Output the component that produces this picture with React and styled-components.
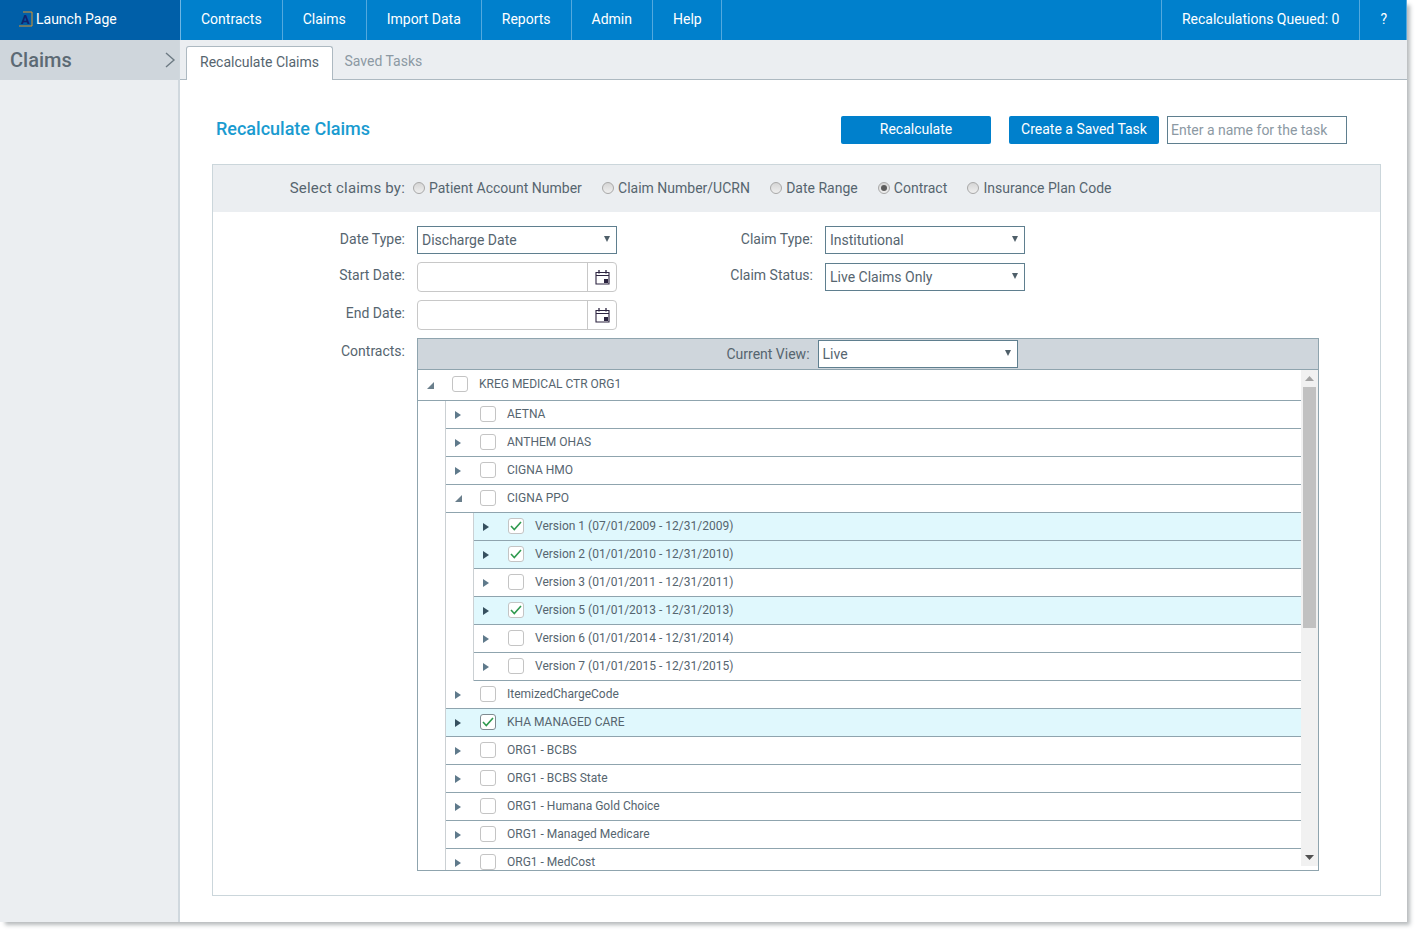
import React from 'react';
import styled, { createGlobalStyle } from 'styled-components';

const Global = createGlobalStyle`
  html, body, #root { margin: 0; padding: 0; background: #fff; height: 100%; }
  body { font-family: Roboto, "Liberation Sans", sans-serif; color: #56656f; overflow: hidden; }
  * { box-sizing: border-box; }
`;

const Frame = styled.div`
  width: 1407px; height: 922px; display: flex; flex-direction: column; overflow: hidden; background: #fff;
  box-shadow: 4px 4px 4px -1px rgba(50,60,65,.35);
`;
const Header = styled.header`display: flex; height: 40px; background: #0080cc; color: #fff; font-size: 14px; flex: none;`;
const Launch = styled.div`
  width: 181px; background: #005fa8; display: flex; align-items: center; padding: 0 0 2px 18px; gap: 3px; border-right: 1px solid #6db6e4;
`;
const NavItem = styled.div`
  display: flex; align-items: center; height: 100%; padding: 0 ${p => p.$pr || 20}px 2px 20px; border-right: 1px solid #53a9de;
  ${p => p.$left ? 'border-left: 1px solid #53a9de; margin-left: auto;' : ''}
`;
const Body = styled.div`display: flex; flex: 1; min-height: 0;`;
const Side = styled.aside`width: 180px; flex: none; background: #ebeef1; border-right: 2px solid #d0d8de;`;
const SideHead = styled.div`
  height: 40px; background: #cfd6dc; display: flex; align-items: center; justify-content: space-between;
  padding: 0 3px 0 10px; margin-right: -1px; font-size: 20px; font-weight: 500; color: #5c6a74;
`;
const Main = styled.main`flex: 1; display: flex; flex-direction: column; min-width: 0;`;
const Tabs = styled.div`
  height: 40px; flex: none; background: #ebeef1; border-bottom: 1px solid #adb9c1; display: flex; align-items: flex-end; padding-left: 6px;
`;
const Tab = styled.div`
  height: 34px; display: flex; align-items: center; font-size: 14px; padding: 0 13px; position: relative; top: ${p => p.$on ? '1px' : '0'};
  ${p => p.$on
    ? 'background:#fff; border:1px solid #adb9c1; border-bottom:0; border-radius:3px 3px 0 0; color:#56656f; padding-bottom:3px;'
    : 'color:#8c99a3; padding: 0 11.5px 2px 11.5px;'}
`;
const Content = styled.div`flex: 1; padding: 36px 26px 26px 32px; display: flex; flex-direction: column;`;
const TopBar = styled.div`display: flex; align-items: center; height: 28px; margin-bottom: 20px;`;
const Title = styled.h1`margin: 0 0 0 4px; font-size: 18px; font-weight: 500; color: #1a9bd0; flex: 1; position: relative; top: -2px;`;
const Btn = styled.button`
  height: 28px; width: ${p => p.$w}px; background: #0080cc; color: #fff; border: 0; border-radius: 2px; font: 14px Roboto, sans-serif; margin-right: ${p => p.$mr}px; padding: 0 0 2px;
`;
const TaskInput = styled.div`
  width: 180px; height: 28px; border: 1px solid #5f7f8f; font-size: 14px; color: #8c99a3; display: flex; align-items: center; padding-left: 3px; margin-right: 34px;
`;
const Panel = styled.section`width: 1169px; height: 732px; border: 1px solid #cbd6db; display: flex; flex-direction: column;`;
const SelectBar = styled.div`height: 47px; flex: none; background: #ebeef1; display: flex; align-items: center;`;
const SelectLabel = styled.span`width: 192px; text-align: right; font-size: 15px; letter-spacing: .2px; margin-right: 8px; position: relative; top: -1px;`;
const RadioItem = styled.label`display: flex; align-items: center; font-size: 14px; margin-right: 20.2px; gap: 4px; padding-bottom: 2px;`;
const RadioDot = styled.span`
  width: 12px; height: 12px; border-radius: 50%; border: 1px solid #a8a8a8; background: linear-gradient(#d6d6d6,#efefef); display: flex; align-items: center; justify-content: center;
  &::after { content: ''; display: ${p => p.$on ? 'block' : 'none'}; width: 6px; height: 6px; border-radius: 50%; background: #5c5c5c; }
`;
const Form = styled.div`padding-top: 14px; display: flex; flex-direction: column; flex: 1; min-height: 0;`;
const Row = styled.div`display: flex; align-items: flex-start; height: ${p => p.$h}px; margin-bottom: ${p => p.$mb || 0}px;`;
const Label = styled.div`
  width: ${p => p.$w || 192}px; text-align: right; margin-right: 12px; font-size: 14px; flex: none; padding-top: 5px;
`;
const Select = styled.div`
  width: 200px; height: 28px; flex: none; margin-top: ${p => p.$mt || 0}px; border: 1px solid #5f7f8f; background: #fff; display: flex; align-items: center; justify-content: space-between;
  padding: 0 6px 0 4px; font-size: 14px; color: #56656f;
  &::after { content: ''; border-left: 3.5px solid transparent; border-right: 3.5px solid transparent; border-top: 6px solid #4f5f69; margin-top: -2px; }
`;
const DateBox = styled.div`
  width: 200px; height: 30px; border: 1px solid #c8c8c8; border-radius: 4px; display: flex; justify-content: flex-end; background: #fff;
`;
const CalCell = styled.div`width: 29px; border-left: 1px solid #c8c8c8; display: flex; align-items: center; justify-content: center; padding-bottom: 1px;`;
const TreeBox = styled.div`width: 902px; height: 533px; border: 1px solid #8fa4ae; display: flex; flex-direction: column;`;
const TreeHead = styled.div`
  height: 31px; flex: none; background: #cfd6dc; border-bottom: 1px solid #8fa4ae; display: flex; align-items: center; justify-content: center; font-size: 14px; gap: 8px; padding-left: 8px;
`;
const TreeBody = styled.div`flex: 1; display: flex; min-height: 0;`;
const Scroll = styled.div`flex: 1; overflow: hidden; min-width: 0;`;
const Group = styled.div`margin-left: 27px; border-left: 1px solid #cbd0d3;`;
const TreeRow = styled.div`
  height: ${p => p.$h || 28}px; border-bottom: 1px solid #8fa4ae; display: flex; align-items: center; background: ${p => p.$on ? '#e0f8fd' : '#fff'};
  font-size: 12px; color: #56656f; padding: 0 0 2px 6px;
`;
const Arrow = styled.span`
  width: 12px; flex: none; display: flex; justify-content: center; margin-right: 16px; padding-top: 2px;
`;
const Check = styled.span`
  width: 16px; height: 16px; flex: none; border: 1px solid ${p => p.$focus ? '#7f8a90' : '#c4c4c4'}; border-radius: 3px; background: #fff; margin-right: 11px; display: flex; align-items: center; justify-content: center;
`;
const Bar = styled.div`width: 17px; flex: none; background: #f1f1f1; display: flex; flex-direction: column; align-items: center; height: 496px;`;
const BarArrow = styled.div`height: 17px; flex: none; display: flex; align-items: center; justify-content: center;`;
const Thumb = styled.div`width: 13px; height: 241px; background: #c1c1c1; flex: none;`;
const Spacer = styled.div`flex: 1;`;

const Right = ({ on }) => <svg width="6" height="8" viewBox="0 0 6 8"><path d="M0 0L6 4L0 8Z" fill={on ? '#36505f' : '#5f7a8b'} /></svg>;
const Down = () => <svg width="7" height="7" viewBox="0 0 7 7"><path d="M7 0V7H0Z" fill="#6a7f8c" /></svg>;
const Tick = () => <svg width="12" height="10" viewBox="0 0 12 10" fill="none"><path d="M1 5L4.3 8.5L11 1" stroke="#2f9a4f" strokeWidth="1.6" /></svg>;
const Chevron = () => <svg width="12" height="18" viewBox="0 0 12 18" fill="none"><path d="M2 2L10 9L2 16" stroke="#6d7a83" strokeWidth="1.4" /></svg>;
const Cal = () => (
  <svg width="15" height="16" viewBox="0 0 15 16" fill="none">
    <path d="M1 3.5H14V15H1Z M1 6.5H14" stroke="#2c2440" strokeWidth="1.1" />
    <path d="M4 1V4.5M11 1V4.5" stroke="#2c2440" strokeWidth="1.3" />
    <rect x="9" y="10" width="4" height="4" fill="#2c2440" />
  </svg>
);
const Logo = () => (
  <svg width="15" height="16" viewBox="0 0 15 16" fill="none">
    <path d="M5 1H14V15H1" stroke="#d9962a" strokeWidth="1" />
    <text x="3" y="13" fontFamily="Roboto, sans-serif" fontSize="13" fontWeight="700" fill="#12246e">A</text>
  </svg>
);
const Tri = ({ up }) => (
  <svg width="9" height="5" viewBox="0 0 9 5"><path d={up ? 'M4.5 0L9 5H0Z' : 'M0 0H9L4.5 5Z'} fill={up ? '#a3a3a3' : '#505050'} /></svg>
);

const Node = ({ label, open, on, h, focus }) => (
  <TreeRow $on={on} $h={h}>
    <Arrow>{open ? <Down /> : <Right on={on} />}</Arrow>
    <Check $focus={focus}>{on && <Tick />}</Check>
    {label}
  </TreeRow>
);

const radios = [
  ['Patient Account Number'], ['Claim Number/UCRN'], ['Date Range'], ['Contract', true], ['Insurance Plan Code'],
];
const versions = [
  ['Version 1 (07/01/2009 - 12/31/2009)', true],
  ['Version 2 (01/01/2010 - 12/31/2010)', true],
  ['Version 3 (01/01/2011 - 12/31/2011)'],
  ['Version 5 (01/01/2013 - 12/31/2013)', true],
  ['Version 6 (01/01/2014 - 12/31/2014)'],
  ['Version 7 (01/01/2015 - 12/31/2015)'],
];
const after = [
  ['ItemizedChargeCode'], ['KHA MANAGED CARE', true, true], ['ORG1 - BCBS'], ['ORG1 - BCBS State'],
  ['ORG1 - Humana Gold Choice'], ['ORG1 - Managed Medicare'], ['ORG1 - MedCost'],
];
const nav = [['Contracts'], ['Claims'], ['Import Data'], ['Reports'], ['Admin'], ['Help', 19]];

export default function App() {
  return (
    <Frame>
      <Global />
      <Header>
        <Launch><Logo />Launch Page</Launch>
        {nav.map(([t, pr]) => <NavItem key={t} $pr={pr}>{t}</NavItem>)}
        <NavItem $left>Recalculations Queued: 0</NavItem>
        <NavItem $pr={19}>?</NavItem>
      </Header>
      <Body>
        <Side>
          <SideHead>Claims<Chevron /></SideHead>
        </Side>
        <Main>
          <Tabs>
            <Tab $on>Recalculate Claims</Tab>
            <Tab>Saved Tasks</Tab>
          </Tabs>
          <Content>
            <TopBar>
              <Title>Recalculate Claims</Title>
              <Btn $w={150} $mr={18}>Recalculate</Btn>
              <Btn $w={150} $mr={8}>Create a Saved Task</Btn>
              <TaskInput>Enter a name for the task</TaskInput>
            </TopBar>
            <Panel>
              <SelectBar>
                <SelectLabel>Select claims by:</SelectLabel>
                {radios.map(([t, on]) => <RadioItem key={t}><RadioDot $on={on} />{t}</RadioItem>)}
              </SelectBar>
              <Form>
                <Row $h={28} $mb={8}>
                  <Label>Date Type:</Label>
                  <Select>Discharge Date</Select>
                  <Label $w={196}>Claim Type:</Label>
                  <Select>Institutional</Select>
                </Row>
                <Row $h={30} $mb={8}>
                  <Label>Start Date:</Label>
                  <DateBox><CalCell><Cal /></CalCell></DateBox>
                  <Label $w={196}>Claim Status:</Label>
                  <Select $mt={1}>Live Claims Only</Select>
                </Row>
                <Row $h={30} $mb={8}>
                  <Label>End Date:</Label>
                  <DateBox><CalCell><Cal /></CalCell></DateBox>
                </Row>
                <Row $h={533}>
                  <Label>Contracts:</Label>
                  <TreeBox>
                    <TreeHead>Current View:<Select>Live</Select></TreeHead>
                    <TreeBody>
                      <Scroll>
                        <Node label="KREG MEDICAL CTR ORG1" open h={31} />
                        <Group>
                          <Node label="AETNA" />
                          <Node label="ANTHEM OHAS" />
                          <Node label="CIGNA HMO" />
                          <Node label="CIGNA PPO" open />
                          <Group>
                            {versions.map(([t, on]) => <Node key={t} label={t} on={on} />)}
                          </Group>
                          {after.map(([t, on, focus]) => <Node key={t} label={t} on={on} focus={focus} />)}
                        </Group>
                      </Scroll>
                      <Bar>
                        <BarArrow><Tri up /></BarArrow>
                        <Thumb />
                        <Spacer />
                        <BarArrow><Tri /></BarArrow>
                      </Bar>
                    </TreeBody>
                  </TreeBox>
                </Row>
              </Form>
            </Panel>
          </Content>
        </Main>
      </Body>
    </Frame>
  );
}
